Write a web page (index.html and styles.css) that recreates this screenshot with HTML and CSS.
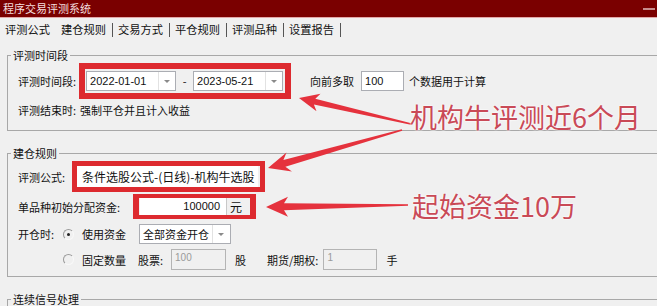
FILE: index.html
```html
<!DOCTYPE html>
<html lang="zh-CN">
  <head>
    <meta charset="UTF-8" />
    <title>程序交易评测系统</title>
    <link rel="stylesheet" href="styles.css">
  </head>
  <body>
    <div class="window">
      <div class="titlebar">
        <span class="title">程序交易评测系统</span>
        <span class="min-btn"></span>
      </div>

      <div class="tabs">
        <span class="tab">评测公式</span>
        <span class="tab active">建仓规则</span><span class="sep"></span>
        <span class="tab">交易方式</span><span class="sep"></span>
        <span class="tab">平仓规则</span><span class="sep"></span>
        <span class="tab">评测品种</span><span class="sep"></span>
        <span class="tab">设置报告</span><span class="sep"></span>
      </div>

      <fieldset class="group group-period">
        <legend>评测时间段</legend>
        <div class="row row-dates">
          <span class="lbl">评测时间段:</span>
          <div class="mark mark-dates">
            <div class="combo combo-date">
              <span class="val num">2022-01-01</span><span class="btn"></span>
            </div>
            <span class="dash">-</span>
            <div class="combo combo-date">
              <span class="val num">2023-05-21</span><span class="btn"></span>
            </div>
          </div>
          <span class="lbl lbl-fetch">向前多取</span>
          <span class="input input-fetch num">100</span>
          <span class="lbl lbl-after">个数据用于计算</span>
        </div>
        <div class="row row-end">
          <span class="lbl">评测结束时:</span>
          <span class="lbl lbl-end">强制平仓并且计入收益</span>
        </div>
      </fieldset>

      <fieldset class="group group-build">
        <legend>建仓规则</legend>
        <div class="row row-formula">
          <span class="lbl lbl-formula">评测公式:</span>
          <div class="mark mark-formula">
            <span class="formula">条件选股公式-(日线)-机构牛选股</span>
          </div>
        </div>
        <div class="row row-money">
          <span class="lbl lbl-money">单品种初始分配资金:</span>
          <div class="mark mark-money">
            <span class="money num">100000</span>
            <span class="unit">元</span>
          </div>
        </div>
        <div class="row row-open">
          <span class="lbl lbl-open">开仓时:</span>
          <span class="radio checked"></span>
          <span class="lbl">使用资金</span>
          <div class="combo combo-mode">
            <span class="val">全部资金开仓</span><span class="btn"></span>
          </div>
        </div>
        <div class="row row-fixed">
          <span class="radio"></span>
          <span class="lbl">固定数量</span>
          <span class="lbl lbl-stock">股票:</span>
          <span class="input disabled input-stock num">100</span>
          <span class="lbl lbl-unit">股</span>
          <span class="lbl lbl-future">期货/期权:</span>
          <span class="input disabled input-future num">1</span>
          <span class="lbl lbl-hand">手</span>
        </div>
      </fieldset>

      <fieldset class="group group-signal">
        <legend>连续信号处理</legend>
      </fieldset>

      <div class="annot">
        <svg class="arrows" width="657" height="306" viewBox="0 0 657 306">
          <polygon points="299,98 320.5,93.7 315.3,98.7 411.2,123.3 410.8,124.7 313.9,104.5 316.5,111.3" />
          <polygon points="268,168 286.5,152.4 283.4,160 401.8,129.3 402.2,130.7 285.4,166.8 291.9,171.6" />
          <polygon points="266,207 288,196.7 284,203.2 408,204.3 408,205.7 284,210.2 288,216.7" />
        </svg>
        <span class="note note-period">机构牛评测近6个月</span>
        <span class="note note-money">起始资金10万</span>
      </div>
    </div>
  </body>
</html>
```

FILE: styles.css
```css
html,
body {
  margin: 0;
  padding: 0;
}

body {
  background-color: #f0f0f0;
  font-family: "Noto Sans CJK SC", sans-serif;
  font-size: 11px;
  color: #111;
  overflow: hidden;
}

.window {
  position: relative;
  width: 657px;
  height: 306px;
  overflow: hidden;
}

.num {
  font-family: "Liberation Sans", "Noto Sans CJK SC", sans-serif;
}

/* title bar */
.titlebar {
  display: flex;
  align-items: center;
  height: 17px;
  padding-left: 3px;
  background-color: #7a0000;
  border-bottom: 1px solid #e2a8a8;
}

.title {
  color: #f4dede;
  font-size: 11px;
  line-height: 17px;
}

.min-btn {
  margin-left: auto;
  margin-right: 2px;
  width: 12px;
  height: 2px;
  background-color: #c88c8c;
}

/* tabs */
.tabs {
  display: flex;
  align-items: center;
  height: 23px;
  padding-left: 0;
}

.tab {
  padding: 0 6px 0 5px;
  font-size: 11.25px;
  line-height: 23px;
  color: #111;
}

.sep {
  width: 1px;
  height: 14px;
  background-color: #555;
}

/* group boxes */
.group {
  margin: 0 -20px 0 7px;
  padding: 0;
  border: 1px solid #a8a8a8;
  min-inline-size: 0;
}

.group legend {
  margin-left: 3px;
  padding: 0 2px;
  font-size: 11px;
  line-height: 14px;
  color: #111;
}

.group-period {
  margin-top: 7px;
  padding-bottom: 13px;
}

.group-build {
  margin-top: 15px;
  padding-bottom: 6px;
}

.group-signal {
  margin-top: 15px;
  height: 40px;
}

.row {
  display: flex;
  align-items: center;
  padding-left: 10px;
  line-height: 14px;
}

.lbl {
  white-space: nowrap;
}

/* red annotation boxes */
.mark {
  display: flex;
  align-items: center;
  border: 6px solid #dd2a2f;
}

.mark-dates {
  margin-left: 3px;
  padding: 2px 2px 2px 1px;
}

.dash {
  width: 17px;
  text-align: center;
}

.mark-formula {
  margin-left: 7px;
  border-width: 5px;
  padding: 0 2px 0 0;
}

.formula {
  width: 176px;
  height: 21px;
  padding-left: 5px;
  background-color: #fff;
  font-size: 12px;
  line-height: 21px;
  white-space: nowrap;
}

.mark-money {
  margin-left: 13px;
  border-width: 4px 6px;
  padding: 0 0 0 1px;
}

.money {
  width: 80px;
  height: 17px;
  padding-right: 6px;
  background-color: #fff;
  text-align: right;
  line-height: 17px;
}

.unit {
  width: 20px;
  height: 17px;
  padding-left: 3px;
  border-left: 1px solid #c8c8c8;
  background-color: #f0f0f0;
  line-height: 17px;
  font-size: 12px;
}

/* combo boxes and inputs */
.combo {
  display: flex;
  height: 20px;
  box-sizing: border-box;
  border: 1px solid #abadb3;
  background-color: #fff;
}

.combo .val {
  flex: 1;
  padding-left: 3px;
  line-height: 18px;
  white-space: nowrap;
  overflow: hidden;
}

.combo .btn {
  position: relative;
  width: 16px;
  border-left: 1px solid #e2e2e2;
}

.combo .btn::after {
  content: "";
  position: absolute;
  left: 5px;
  top: 8px;
  border-left: 3px solid transparent;
  border-right: 3px solid transparent;
  border-top: 3px solid #8a8a8a;
}

.combo-date {
  width: 90px;
}

.combo-mode {
  width: 92px;
  margin-left: 13px;
}

.combo-mode .btn {
  width: 17px;
}

.input {
  height: 20px;
  box-sizing: border-box;
  padding-left: 3px;
  border: 1px solid #abadb3;
  background-color: #fff;
  line-height: 18px;
}

.input.disabled {
  height: 21px;
  border-color: #b4b4b4;
  background-color: #f0f0f0;
  color: #9a9a9a;
  font-size: 10px;
  line-height: 16px;
}

.lbl-fetch {
  margin-left: 19px;
}

.input-fetch {
  width: 43px;
  margin-left: 7px;
}

.lbl-after {
  margin-left: 5px;
}

.row-dates {
  margin-top: 1px;
}

.row-end {
  margin-top: 4px;
}

.lbl-end {
  margin-left: 4px;
}

.row-formula {
  margin-top: 1px;
}

.row-money {
  margin-top: 2px;
}

.row-open {
  margin-top: 5px;
}

.row-fixed {
  margin-top: 5px;
  padding-left: 55px;
}

/* radio buttons */
.radio {
  position: relative;
  width: 9px;
  height: 9px;
  margin-left: 8px;
  margin-right: 8px;
  border: 1px solid;
  border-color: #9a9a9a #f8f8f8 #f8f8f8 #9a9a9a;
  border-radius: 50%;
}

.row-fixed .radio {
  margin-left: 0;
}

.radio.checked::after {
  content: "";
  position: absolute;
  left: 3px;
  top: 3px;
  width: 3px;
  height: 3px;
  border-radius: 50%;
  background-color: #222;
}

.lbl-open {
  width: 37px;
}

.lbl-stock {
  margin-left: 12px;
}

.input-stock {
  width: 55px;
  margin-left: 8px;
}

.lbl-unit {
  margin-left: 9px;
}

.lbl-future {
  margin-left: 21px;
}

.input-future {
  width: 54px;
  margin-left: 5px;
}

.lbl-hand {
  margin-left: 9px;
}

/* overlay notes */
.annot {
  position: absolute;
  top: 0;
  left: 0;
  width: 657px;
  height: 306px;
  pointer-events: none;
}

.arrows {
  position: absolute;
  top: 0;
  left: 0;
}

.arrows polygon {
  fill: #e5323d;
}

.note {
  position: absolute;
  color: #c94a57;
  white-space: nowrap;
  text-shadow: 0 0 2px #fff, 0 0 2px #fff;
}

.note-period {
  left: 410px;
  top: 103px;
  font-size: 27px;
  line-height: 28px;
}

.note-money {
  left: 412px;
  top: 192px;
  font-size: 27px;
  line-height: 27px;
}
```
